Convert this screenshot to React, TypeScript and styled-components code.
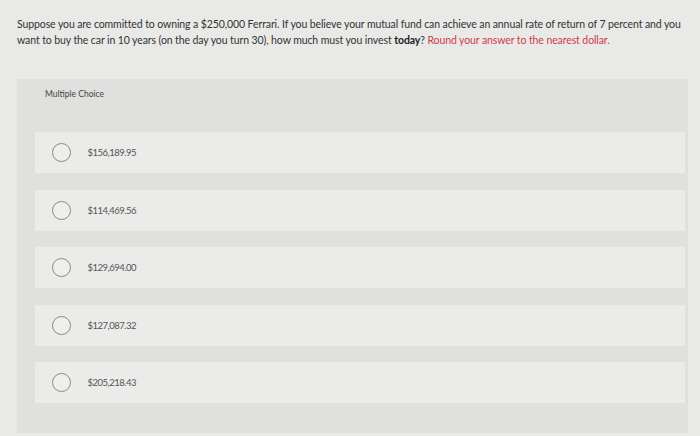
import * as React from 'react';
import styled, { createGlobalStyle } from 'styled-components';

const GlobalStyle = createGlobalStyle`
  html, body {
    margin: 0;
    padding: 0;
    background: #e9e9e7;
  }
  body {
    font-family: 'Lato', 'Liberation Sans', Arial, sans-serif;
  }
`;

const Page = styled.div`
  width: 700px;
  height: 436px;
  box-sizing: border-box;
  padding-top: 16px;
  overflow: hidden;
`;

const Question = styled.p`
  margin: 0 0 31px 17px;
  font-size: 10.5px;
  line-height: 16px;
  color: #333;
  letter-spacing: -0.1px;
`;

const Line = styled.span`
  display: block;
  white-space: nowrap;
`;

const Strong = styled.strong`
  font-weight: 700;
  color: #222;
`;

const Hint = styled.span`
  color: #cf3c46;
`;

const Panel = styled.section`
  margin: 0 12px 0 17px;
  padding: 9px 3px 30px 18px;
  background: #e0e0de;
`;

const PanelLabel = styled.div`
  margin-left: 10px;
  font-size: 8.5px;
  line-height: 12px;
  color: #444;
`;

const Options = styled.ul`
  list-style: none;
  margin: 32px 0 0;
  padding: 0;
  display: flex;
  flex-direction: column;
  gap: 16.5px;
`;

const Option = styled.li`
  height: 41px;
  display: flex;
  align-items: center;
  gap: 17px;
  padding-left: 16.5px;
  background: #ebebe9;
`;

const Radio = styled.span`
  width: 19px;
  height: 19px;
  box-sizing: border-box;
  border: 1.2px solid #8a8a8a;
  border-radius: 50%;
  background: #eeeeec;
  flex-shrink: 0;
`;

const Amount = styled.span`
  font-size: 9.5px;
  color: #555;
  letter-spacing: -0.5px;
`;

const choices = ['$156,189.95', '$114,469.56', '$129,694.00', '$127,087.32', '$205,218.43'];

export default function App() {
  return (
    <Page>
      <GlobalStyle />
      <Question>
        <Line>
          Suppose you are committed to owning a $250,000 Ferrari. If you believe your mutual fund
          can achieve an annual rate of return of 7 percent and you
        </Line>
        <Line>
          want to buy the car in 10 years (on the day you turn 30), how much must you invest{' '}
          <Strong>today</Strong>? <Hint>Round your answer to the nearest dollar.</Hint>
        </Line>
      </Question>
      <Panel>
        <PanelLabel>Multiple Choice</PanelLabel>
        <Options>
          {choices.map((c) => (
            <Option key={c}>
              <Radio />
              <Amount>{c}</Amount>
            </Option>
          ))}
        </Options>
      </Panel>
    </Page>
  );
}
